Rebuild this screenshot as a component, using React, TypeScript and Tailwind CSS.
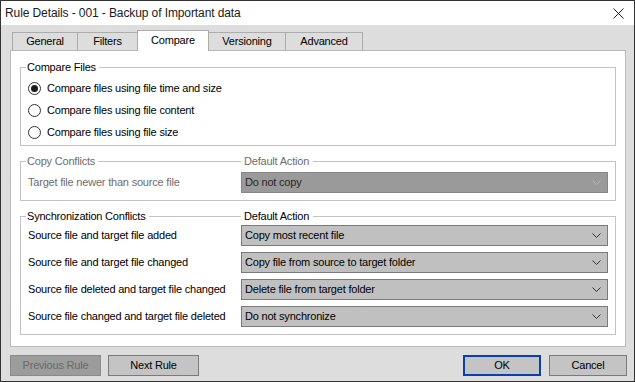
import React from "react";

const tabs = [
  { label: "General", w: "w-[66px]" },
  { label: "Filters", w: "w-[61px]" },
  { label: "Compare", w: "w-[72px]" },
  { label: "Versioning", w: "w-[78px]" },
  { label: "Advanced", w: "w-[78px]" },
];

const syncRows = [
  { label: "Source file and target file added", value: "Copy most recent file" },
  { label: "Source file and target file changed", value: "Copy file from source to target folder" },
  { label: "Source file deleted and target file changed", value: "Delete file from target folder" },
  { label: "Source file changed and target file deleted", value: "Do not synchronize" },
];

function Chevron({ color }: { color: string }) {
  return (
    <svg width="9" height="5" viewBox="0 0 9 5">
      <path d="M0.5 0.5 L4.5 4.5 L8.5 0.5" fill="none" stroke={color} strokeWidth="1" />
    </svg>
  );
}

function Select({ value, disabled }: { value: string; disabled?: boolean }) {
  return (
    <div
      className={
        disabled
          ? "h-[21px] flex items-center justify-between pl-[3px] pr-[6px] border border-[#878787] bg-[#9a9a9a] text-[#262626]"
          : "h-[21px] flex items-center justify-between pl-[3px] pr-[6px] border border-[#7a7a7a] bg-[#c0c0c0] text-black"
      }
    >
      <span>{value}</span>
      <Chevron color={disabled ? "#b4b4b4" : "#333333"} />
    </div>
  );
}

function Radio({ label, checked }: { label: string; checked?: boolean }) {
  return (
    <div className="h-[22px] flex items-center pl-[7px]">
      <div className="w-[13px] h-[13px] rounded-full border border-[#333333] bg-white flex items-center justify-center">
        {checked && <div className="w-[7px] h-[7px] rounded-full bg-[#1a1a1a]" />}
      </div>
      <span className="ml-[6px]">{label}</span>
    </div>
  );
}

export default function App() {
  return (
    <div className="w-[635px] h-[382px] flex flex-col border border-[#333333] bg-[#dddddd] font-['Liberation_Sans',Arial,sans-serif] text-[11px] tracking-[-0.2px] text-black">
      {/* title bar */}
      <div className="h-[24px] bg-white flex items-center justify-between pl-[4px] pr-[10px]">
        <span className="text-[12px] tracking-[-0.1px] text-[#1a1a1a]">Rule Details - 001 - Backup of Important data</span>
        <svg width="11" height="11" viewBox="0 0 11 11">
          <path d="M0.5 0.5 L10.5 10.5 M10.5 0.5 L0.5 10.5" stroke="#1a1a1a" strokeWidth="1" />
        </svg>
      </div>

      <div className="flex-1 flex flex-col pl-[9px] pr-[8px] pt-[5px]">
        {/* tabs */}
        <div className="h-[21px] flex items-end pl-[2px] relative z-10 -mb-px">
          {tabs.map((t, i) =>
            t.label === "Compare" ? (
              <div
                key={t.label}
                className={`${t.w} h-[21px] -ml-px bg-white border border-b-0 border-[#acacac] flex items-center justify-center pb-[2px]`}
              >
                {t.label}
              </div>
            ) : (
              <div
                key={t.label}
                className={`${t.w} h-[18px] mb-px ${i > 0 ? "-ml-px" : ""} bg-[#dddddd] border border-b-0 border-[#acacac] flex items-center justify-center`}
              >
                {t.label}
              </div>
            )
          )}
        </div>

        {/* panel */}
        <div className="h-[297px] bg-white border border-[#b9b9b9] px-[9px] pt-[16px]">
          {/* Compare Files */}
          <div className="border border-[#c3c3c3] pb-[2px]">
            <div className="-mt-[8px] h-[14px] leading-[14px] flex">
              <span className="ml-[5px] pl-[1px] pr-[3px] bg-white">Compare Files</span>
            </div>
            <div className="mt-[3px]">
              <Radio label="Compare files using file time and size" checked />
              <Radio label="Compare files using file content" />
              <Radio label="Compare files using file size" />
            </div>
          </div>

          {/* Copy Conflicts */}
          <div className="mt-[15px] border border-[#c3c3c3] pb-[7px] text-[#6d6d6d]">
            <div className="-mt-[8px] h-[14px] leading-[14px] grid grid-cols-[220px_1fr]">
              <div className="flex">
                <span className="ml-[5px] pl-[1px] pr-[3px] bg-white">Copy Conflicts</span>
              </div>
              <div className="flex">
                <span className="pl-[3px] pr-[4px] bg-white">Default Action</span>
              </div>
            </div>
            <div className="mt-[4px] grid grid-cols-[213px_367px] items-center pl-[7px] pr-[7px]">
              <span>Target file newer than source file</span>
              <Select value="Do not copy" disabled />
            </div>
          </div>

          {/* Synchronization Conflicts */}
          <div className="mt-[15px] border border-[#c3c3c3] pb-[7px]">
            <div className="-mt-[8px] h-[14px] leading-[14px] grid grid-cols-[220px_1fr]">
              <div className="flex">
                <span className="ml-[5px] pl-[1px] pr-[3px] bg-white">Synchronization Conflicts</span>
              </div>
              <div className="flex">
                <span className="pl-[3px] pr-[4px] bg-white">Default Action</span>
              </div>
            </div>
            <div className="mt-[2px] flex flex-col gap-[6px] pl-[7px] pr-[7px]">
              {syncRows.map((r) => (
                <div key={r.label} className="grid grid-cols-[213px_367px] items-center">
                  <span>{r.label}</span>
                  <Select value={r.value} />
                </div>
              ))}
            </div>
          </div>
        </div>

        {/* buttons */}
        <div className="mt-[8px] flex items-center">
          <div className="w-[91px] h-[21px] border border-[#8a8a8a] bg-[#9c9c9c] text-[#6a6a6a] flex items-center justify-center">
            Previous Rule
          </div>
          <div className="ml-[7px] w-[91px] h-[21px] border border-[#7a7a7a] bg-[#c4c4c4] flex items-center justify-center">
            Next Rule
          </div>
          <div className="ml-auto -mr-px flex gap-[8px]">
            <div className="w-[78px] h-[21px] border-2 border-[#0a3fae] bg-[#c4c4c4] flex items-center justify-center">
              OK
            </div>
            <div className="w-[78px] h-[21px] border border-[#7a7a7a] bg-[#c4c4c4] flex items-center justify-center">
              Cancel
            </div>
          </div>
        </div>
      </div>
    </div>
  );
}
